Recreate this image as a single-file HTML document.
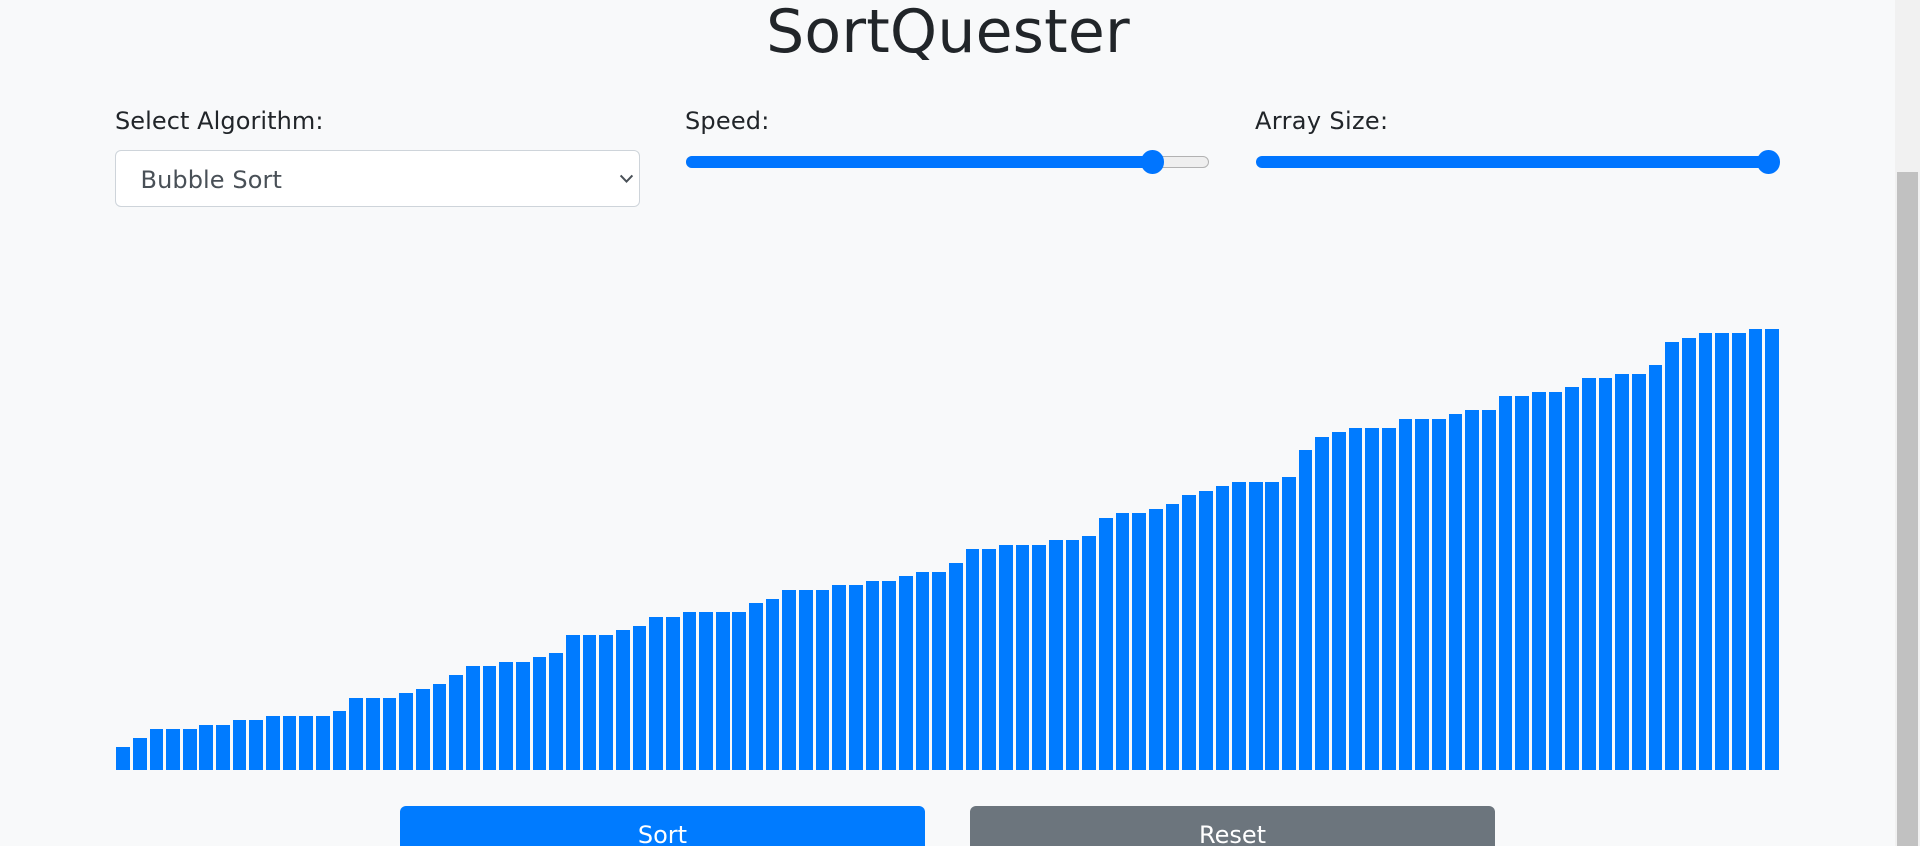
<!DOCTYPE html>
<html lang="en">
<head>
<meta charset="utf-8">
<title>SortQuester</title>
<style>
html,body{margin:0;padding:0;width:1920px;height:846px;overflow:hidden;background:#f8f9fa;}
body{position:relative;font-family:"DejaVu Sans",sans-serif;color:#212529;}
.t{position:absolute;white-space:nowrap;font-size:24px;line-height:28px;}
h1{position:absolute;margin:0;left:0;width:1896px;text-align:center;top:-3px;font-size:60px;line-height:70px;font-weight:400;color:#212529;letter-spacing:.2px;}
.sel{position:absolute;left:115px;top:150px;width:525px;height:57px;box-sizing:border-box;background:#fff;border:1.5px solid #ced4da;border-radius:6px;}
.track{position:absolute;top:156px;height:12px;box-sizing:border-box;border-radius:6px;}
.thumb{position:absolute;top:150px;width:22.5px;height:23.6px;border-radius:50%;background:#0075ff;}
#bars{position:absolute;left:116.1875px;top:270px;height:500px;display:flex;align-items:flex-end;width:1670px;}
#bars i{display:block;flex:none;width:13.6875px;margin-right:2.96875px;background:#007bff;}
.btn{position:absolute;top:806px;height:60px;width:525px;border-radius:6px 6px 0 0;color:#fff;text-align:center;font-size:24px;line-height:28px;}
.btn span{position:absolute;left:0;right:0;top:15px;}
#sbt{position:absolute;left:1895px;top:0;width:25px;height:846px;background:#f1f1f1;}
#sbh{position:absolute;left:1897px;top:172px;width:21px;height:674px;background:#c1c1c1;}
</style>
</head>
<body>
<h1>SortQuester</h1>

<div class="t" style="left:115px;top:107px;letter-spacing:.07px;">Select Algorithm:</div>
<div class="sel"></div>
<div class="t" style="left:140.5px;top:166px;color:#495057;letter-spacing:.1px;">Bubble Sort</div>
<svg style="position:absolute;left:615px;top:170px;" width="24" height="18" viewBox="0 0 24 18"><polyline points="5.6,5.4 11.5,11.6 17.4,5.4" fill="none" stroke="#495057" stroke-width="2"/></svg>

<div class="t" style="left:685px;top:107px;letter-spacing:.2px;">Speed:</div>
<div class="track" style="left:686px;width:523px;background:#efefef;border:1.5px solid #b2b2b2;"></div>
<div class="track" style="left:686px;width:466px;background:#0075ff;"></div>
<div class="thumb" style="left:1141px;"></div>

<div class="t" style="left:1255px;top:107px;letter-spacing:.35px;">Array Size:</div>
<div class="track" style="left:1256px;width:514px;background:#0075ff;"></div>
<div class="thumb" style="left:1757px;"></div>

<div id="bars"><i style="height:23px"></i><i style="height:32px"></i><i style="height:41px"></i><i style="height:41px"></i><i style="height:41px"></i><i style="height:45px"></i><i style="height:45px"></i><i style="height:50px"></i><i style="height:50px"></i><i style="height:54px"></i><i style="height:54px"></i><i style="height:54px"></i><i style="height:54px"></i><i style="height:59px"></i><i style="height:72px"></i><i style="height:72px"></i><i style="height:72px"></i><i style="height:77px"></i><i style="height:81px"></i><i style="height:86px"></i><i style="height:95px"></i><i style="height:104px"></i><i style="height:104px"></i><i style="height:108px"></i><i style="height:108px"></i><i style="height:113px"></i><i style="height:117px"></i><i style="height:135px"></i><i style="height:135px"></i><i style="height:135px"></i><i style="height:140px"></i><i style="height:144px"></i><i style="height:153px"></i><i style="height:153px"></i><i style="height:158px"></i><i style="height:158px"></i><i style="height:158px"></i><i style="height:158px"></i><i style="height:167px"></i><i style="height:171px"></i><i style="height:180px"></i><i style="height:180px"></i><i style="height:180px"></i><i style="height:185px"></i><i style="height:185px"></i><i style="height:189px"></i><i style="height:189px"></i><i style="height:194px"></i><i style="height:198px"></i><i style="height:198px"></i><i style="height:207px"></i><i style="height:221px"></i><i style="height:221px"></i><i style="height:225px"></i><i style="height:225px"></i><i style="height:225px"></i><i style="height:230px"></i><i style="height:230px"></i><i style="height:234px"></i><i style="height:252px"></i><i style="height:257px"></i><i style="height:257px"></i><i style="height:261px"></i><i style="height:266px"></i><i style="height:275px"></i><i style="height:279px"></i><i style="height:284px"></i><i style="height:288px"></i><i style="height:288px"></i><i style="height:288px"></i><i style="height:293px"></i><i style="height:320px"></i><i style="height:333px"></i><i style="height:338px"></i><i style="height:342px"></i><i style="height:342px"></i><i style="height:342px"></i><i style="height:351px"></i><i style="height:351px"></i><i style="height:351px"></i><i style="height:356px"></i><i style="height:360px"></i><i style="height:360px"></i><i style="height:374px"></i><i style="height:374px"></i><i style="height:378px"></i><i style="height:378px"></i><i style="height:383px"></i><i style="height:392px"></i><i style="height:392px"></i><i style="height:396px"></i><i style="height:396px"></i><i style="height:405px"></i><i style="height:428px"></i><i style="height:432px"></i><i style="height:437px"></i><i style="height:437px"></i><i style="height:437px"></i><i style="height:441px"></i><i style="height:441px"></i></div>

<div class="btn" style="left:400px;background:#007bff;"><span>Sort</span></div>
<div class="btn" style="left:970px;background:#6c757d;"><span>Reset</span></div>

<div id="sbt"></div>
<div id="sbh"></div>
</body>
</html>
